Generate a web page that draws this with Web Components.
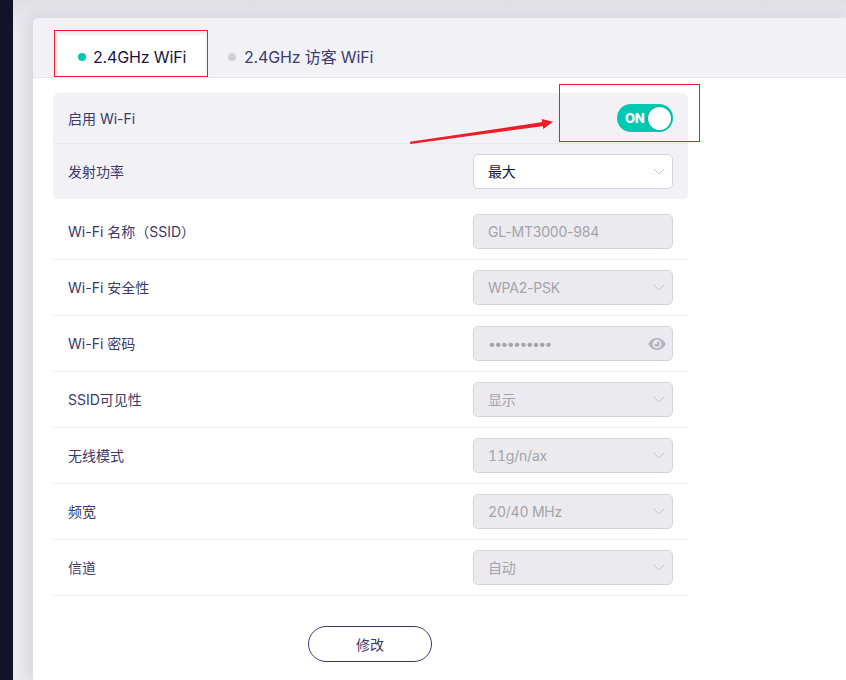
<!DOCTYPE html>
<html lang="zh">
<head>
<meta charset="utf-8">
<title>Wi-Fi</title>
<style>
    html, body { margin: 0; height: 680px; overflow: hidden; }
    body {
        background: #e9e8ed;
        font-family: Inter, "Noto Sans CJK SC", sans-serif;
        color: #2f2d63;
    }
</style>
</head>
<body>
<gl-shell>
    <gl-tabs>
        <gl-tab active>2.4GHz WiFi</gl-tab>
        <gl-tab>2.4GHz 访客 WiFi</gl-tab>
    </gl-tabs>
    <gl-form>
        <gl-group>
            <gl-row label="启用 Wi-Fi" slim><gl-switch></gl-switch></gl-row>
            <gl-row label="发射功率" last><gl-field value="最大" type="select" enabled></gl-field></gl-row>
        </gl-group>
        <gl-row label="Wi-Fi 名称（SSID）" first><gl-field value="GL-MT3000-984"></gl-field></gl-row>
        <gl-row label="Wi-Fi 安全性"><gl-field value="WPA2-PSK" type="select"></gl-field></gl-row>
        <gl-row label="Wi-Fi 密码"><gl-field value="••••••••••" type="password"></gl-field></gl-row>
        <gl-row label="SSID可见性"><gl-field value="显示" type="select"></gl-field></gl-row>
        <gl-row label="无线模式"><gl-field value="11g/n/ax" type="select" tnum></gl-field></gl-row>
        <gl-row label="频宽"><gl-field value="20/40 MHz" type="select" tnum></gl-field></gl-row>
        <gl-row label="信道"><gl-field value="自动" type="select"></gl-field></gl-row>
        <gl-button>修改</gl-button>
    </gl-form>
    <gl-marks></gl-marks>
</gl-shell>

<script>
class Shell extends HTMLElement {
    constructor() {
        super();
        this.attachShadow({ mode: 'open' });
        this.shadowRoot.innerHTML = `
            <style>
                :host {
                    display: flex;
                    height: 680px;
                    position: relative;
                    background: linear-gradient(#e0e0e4, #ebeaef 30px);
                }
                .side {
                    flex: 0 0 13px;
                    background: #111328;
                }
                .main {
                    flex: 1;
                    padding: 18px 0 0 20px;
                    min-width: 0;
                }
                .card {
                    background: #fff;
                    height: 662px;
                    border-radius: 6px 0 0 0;
                    box-shadow: -4px 0 14px rgba(40,40,70,0.12);
                }
            </style>
            <div class="side"></div>
            <div class="main">
                <div class="card"><slot></slot></div>
            </div>
        `;
    }
}

class Tabs extends HTMLElement {
    constructor() {
        super();
        this.attachShadow({ mode: 'open' });
        this.shadowRoot.innerHTML = `
            <style>
                :host {
                    display: flex;
                    height: 60px;
                    box-sizing: border-box;
                    padding: 17px 0 0 25px;
                    background: #f2f1f6;
                    border-bottom: 1px solid #e8e8ec;
                    border-radius: 6px 0 0 0;
                }
            </style>
            <slot></slot>
        `;
    }
}

class Tab extends HTMLElement {
    constructor() {
        super();
        this.attachShadow({ mode: 'open' });
        this.shadowRoot.innerHTML = `
            <style>
                :host {
                    display: flex;
                    align-items: center;
                    gap: 8px;
                    height: 43px;
                    padding: 0 22px;
                    font-size: 16px;
                    line-height: 20px;
                    letter-spacing: -0.15px;
                    white-space: nowrap;
                    color: #3d3b70;
                    border-radius: 4px 4px 0 0;
                }
                :host([active]) {
                    width: 148px;
                    box-sizing: border-box;
                    padding: 0 0 0 20px;
                    gap: 7px;
                    background: #fff;
                    color: #17163f;
                }
                i {
                    flex: none;
                    width: 8px;
                    height: 8px;
                    border-radius: 50%;
                    background: #d1d0d8;
                }
                :host([active]) i { background: #00c9b1; }
            </style>
            <i></i><slot></slot>
        `;
    }
}

class Form extends HTMLElement {
    constructor() {
        super();
        this.attachShadow({ mode: 'open' });
        this.shadowRoot.innerHTML = `
            <style>
                :host {
                    display: block;
                    width: 635px;
                    margin-left: 20px;
                    padding-top: 15px;
                }
            </style>
            <slot></slot>
        `;
    }
}

class Group extends HTMLElement {
    constructor() {
        super();
        this.attachShadow({ mode: 'open' });
        this.shadowRoot.innerHTML = `
            <style>
                :host {
                    display: block;
                    background: #f2f1f6;
                    border-radius: 6px;
                }
            </style>
            <slot></slot>
        `;
    }
}

class Row extends HTMLElement {
    constructor() {
        super();
        this.attachShadow({ mode: 'open' });
        this.shadowRoot.innerHTML = `
            <style>
                :host {
                    display: flex;
                    justify-content: space-between;
                    align-items: center;
                    box-sizing: border-box;
                    height: 56px;
                    padding: 0 15px;
                    border-bottom: 1px solid #e9e9ec;
                    font-size: 14px;
                    line-height: 18px;
                    color: #3b3968;
                }
                :host([slim]) { height: 51px; }
                :host([slim]) .label { margin-top: 1px; }
                :host([last]) { height: 55px; border-bottom: 0; }
                :host([first]) { height: 61px; padding-top: 5px; }
            </style>
            <span class="label"></span>
            <slot></slot>
        `;
        this.shadowRoot.querySelector('.label').textContent = this.getAttribute('label');
    }
}

class Field extends HTMLElement {
    constructor() {
        super();
        this.attachShadow({ mode: 'open' });
        const type = this.getAttribute('type');
        let icon = '';
        if (type === 'select') {
            icon = `<svg width="12" height="7" viewBox="0 0 12 7"><path d="M.7.7 6 6 11.3.7" fill="none" stroke="#c9c9d0" stroke-width="1"/></svg>`;
        } else if (type === 'password') {
            icon = `<svg width="18" height="12" viewBox="0 0 18 12"><path fill-rule="evenodd" fill="#b4b4ba" d="M9 0c4 0 7.300 2.600 8.600 6C16.300 9.400 13 12 9 12S1.700 9.400.4 6C1.700 2.600 5 0 9 0Zm0 1.600a4.400 4.400 0 1 0 0 8.800 4.400 4.400 0 0 0 0-8.800Zm0 1.700a2.700 2.700 0 1 1-2.700 2.700H9Z"/></svg>`;
        }
        this.shadowRoot.innerHTML = `
            <style>
                :host {
                    display: flex;
                    align-items: center;
                    justify-content: space-between;
                    box-sizing: border-box;
                    width: 200px;
                    height: 35px;
                    padding: 0 7px 0 14px;
                    border: 1px solid #d4d4da;
                    border-radius: 5px;
                    background: #ebebef;
                    color: #a3a3a9;
                    font-size: 14px;
                    line-height: 18px;
                    letter-spacing: -0.2px;
                }
                :host([enabled]) {
                    background: #fff;
                    color: #17163f;
                }
                :host([tnum]) { font-variant-numeric: tabular-nums; }
                :host([type="password"]) { padding-right: 6px; }
                :host([type="password"]) span { letter-spacing: -1.6px; }
            </style>
            <span></span>${icon}
        `;
        this.shadowRoot.querySelector('span').textContent = this.getAttribute('value');
    }
}

class Switch extends HTMLElement {
    constructor() {
        super();
        this.attachShadow({ mode: 'open' });
        this.shadowRoot.innerHTML = `
            <style>
                :host {
                    display: flex;
                    align-items: center;
                    justify-content: space-between;
                    box-sizing: border-box;
                    width: 56px;
                    height: 28px;
                    padding: 0 2px 0 8px;
                    border-radius: 14px;
                    background: #00c9b1;
                    color: #fff;
                    font-size: 13px;
                    font-weight: 800;
                    letter-spacing: -0.2px;
                }
                i {
                    width: 23px;
                    height: 23px;
                    border-radius: 50%;
                    background: #fff;
                    box-shadow: 0 0 2px rgba(0,0,0,0.35);
                }
            </style>
            <span>ON</span><i></i>
        `;
    }
}

class Button extends HTMLElement {
    constructor() {
        super();
        this.attachShadow({ mode: 'open' });
        this.shadowRoot.innerHTML = `
            <style>
                :host {
                    display: flex;
                    align-items: center;
                    justify-content: center;
                    box-sizing: border-box;
                    width: 124px;
                    height: 36px;
                    margin: 30px 0 0 255px;
                    border: 1px solid #3a3870;
                    border-radius: 18px;
                    font-size: 14px;
                    color: #3b3968;
                }
            </style>
            <slot></slot>
        `;
    }
}

// red boxes and arrow lie on top of the page, like a screenshot annotation
class Marks extends HTMLElement {
    constructor() {
        super();
        this.attachShadow({ mode: 'open' });
        this.shadowRoot.innerHTML = `
            <style>
                :host {
                    position: absolute;
                    inset: 0;
                    pointer-events: none;
                }
                svg { display: block; }
            </style>
            <svg width="846" height="680" viewBox="0 0 846 680">
                <rect x="54.500" y="30.500" width="153" height="46" fill="none" stroke="#ee1c25"/>
                <rect x="559.500" y="84.500" width="140" height="57" fill="none" stroke="#ee1c25"/>
                <path d="M410 141.800 L543 122 L544 126 L410.500 144 Z" fill="#ee1c25"/>
                <path d="M553 121.700 L541.700 119 L543.300 129 Z" fill="#ee1c25"/>
            </svg>
        `;
    }
}

customElements.define('gl-shell', Shell);
customElements.define('gl-tabs', Tabs);
customElements.define('gl-tab', Tab);
customElements.define('gl-form', Form);
customElements.define('gl-group', Group);
customElements.define('gl-row', Row);
customElements.define('gl-field', Field);
customElements.define('gl-switch', Switch);
customElements.define('gl-button', Button);
customElements.define('gl-marks', Marks);
</script>
</body>
</html>
